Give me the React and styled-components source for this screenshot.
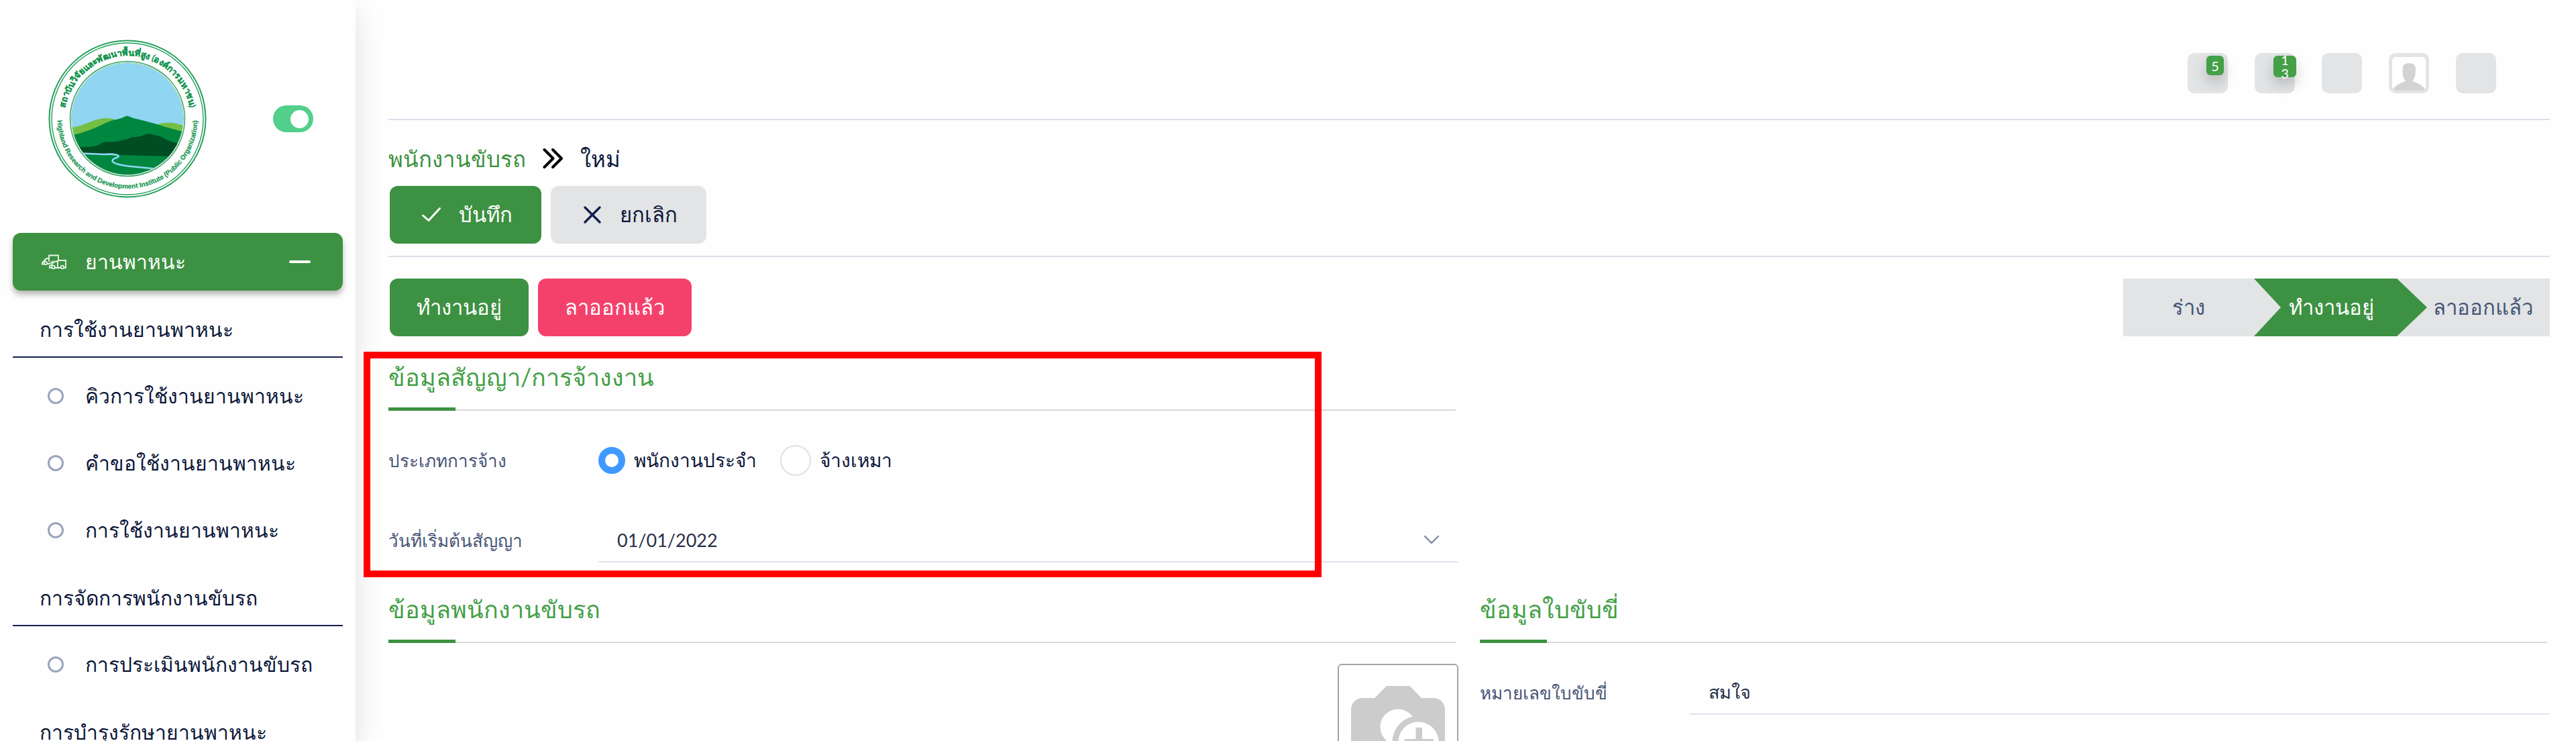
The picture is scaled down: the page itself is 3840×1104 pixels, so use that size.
import React, { useState } from 'react';
import styled, { createGlobalStyle, css } from 'styled-components';

const GlobalStyle = createGlobalStyle`
  *,
  *::before,
  *::after {
    box-sizing: border-box;
  }

  body {
    margin: 0;
    background: #fefefe;
    color: #0b1739;
    font-family: Lato, sans-serif;
    font-size: 30px;
  }

  button,
  input {
    font: inherit;
    color: inherit;
    margin: 0;
  }

  button {
    border: 0;
    padding: 0;
    cursor: pointer;
  }

  a {
    color: inherit;
    text-decoration: none;
  }
`;

const Page = styled.div`
  display: flex;
  height: 100vh;
  overflow: hidden;
`;

const Sidebar = styled.aside`
  flex: 0 0 530px;
  padding: 0 19px;
  background: #fefefe;
  box-shadow: 0 16px 40px rgba(0, 0, 0, 0.12);
`;

const Brand = styled.div`
  display: flex;
  align-items: center;
  justify-content: space-between;
  padding: 59px 44px 52px 53px;
`;

const LogoSvg = styled.svg`
  display: block;
  width: 236px;
  height: 236px;
`;

const Toggle = styled.input.attrs({ type: 'checkbox' })`
  appearance: none;
  display: flex;
  align-items: center;
  width: 60px;
  height: 40px;
  padding: 0 7px;
  border-radius: 20px;
  background: #c9ced8;

  &::before {
    content: '';
    width: 27px;
    height: 27px;
    border-radius: 50%;
    background: white;
  }

  &:checked {
    justify-content: flex-end;
    background: #52cf8b;
  }
`;

const MenuButton = styled.button`
  display: flex;
  align-items: center;
  gap: 27px;
  width: 100%;
  height: 86px;
  margin-bottom: 7px;
  padding: 0 48px 0 43px;
  border-radius: 12px;
  background: #3d9142;
  color: white;
  box-shadow: 0 6px 8px rgba(0, 0, 0, 0.28);
`;

const MinusBar = styled.span`
  width: 32px;
  height: 4px;
  margin-left: auto;
  border-radius: 2px;
  background: white;
`;

const MenuGroup = styled.div`
  display: flex;
  align-items: center;
  height: 93px;
  margin-bottom: 7px;
  padding: 12px 40px 0;
  border-bottom: 2px solid #131f4d;
  white-space: nowrap;
`;

const MenuItem = styled.a`
  display: flex;
  align-items: center;
  gap: 32px;
  height: 100px;
  padding-left: 52px;
  white-space: nowrap;

  &::before {
    content: '';
    width: 24px;
    height: 24px;
    border: 3px solid #9aa4bd;
    border-radius: 50%;
  }
`;

const Main = styled.main`
  flex: 1;
  min-width: 0;
  padding: 0 39px 0 49px;
`;

const TopBar = styled.header`
  display: flex;
  justify-content: flex-end;
  gap: 40px;
  padding: 79px 80px 38px;
  border-bottom: 2px solid #dadfea;
`;

const TopButton = styled.button`
  position: relative;
  width: 60px;
  height: 60px;
  padding: 6px 5px 4px;
  border-radius: 10px;
  background: #e2e4e6;
`;

const Badge = styled.span`
  position: absolute;
  top: 4px;
  left: 28px;
  display: flex;
  align-items: center;
  justify-content: center;
  width: ${props => (props.$wide ? 34 : 26)}px;
  height: ${props => (props.$wide ? 32 : 29)}px;
  padding: 0 ${props => (props.$wide ? 12 : 6)}px;
  border-radius: 6px;
  background: #43a047;
  color: white;
  font-size: 20px;
  line-height: 20px;
  word-break: break-all;
  box-shadow: 0 10px 20px rgba(0, 0, 0, 0.2);
`;

const Avatar = styled.svg`
  display: block;
  width: 50px;
  height: 50px;
  border-radius: 6px;
`;

const ControlPanel = styled.div`
  padding: 33px 0 18px;
  border-bottom: 2px solid #dadfea;
`;

const Breadcrumb = styled.nav`
  display: flex;
  align-items: center;
  gap: 25px;
  margin-bottom: 17px;
  font-size: 33px;
  line-height: 48px;

  a {
    color: #3d9142;
  }
`;

const ButtonRow = styled.div`
  display: flex;
  gap: 14px;
  padding-left: 2px;
`;

const tones = {
  green: css`
    background: #3d9142;
    color: white;
  `,
  grey: css`
    background: #e2e4e6;
  `,
  red: css`
    background: #f4416c;
    color: white;
  `,
};

const Button = styled.button`
  display: flex;
  align-items: center;
  gap: 27px;
  height: 86px;
  padding: 0 40px;
  border-radius: 12px;
  font-size: 31px;
  white-space: nowrap;
  ${props => tones[props.$tone]}
`;

const IconButton = styled(Button)`
  padding: 0 43px 0 48px;
`;

const StatusRow = styled.div`
  display: flex;
  justify-content: space-between;
  margin: 32px 0 14px;
`;

const StatusBar = styled.div`
  display: flex;
  height: 86px;
  background: #e2e4e6;
  color: #475577;
`;

const Stage = styled.button`
  padding: ${props => props.$pad};
  background: transparent;
  font-size: 31px;
  white-space: nowrap;

  ${props =>
    props.$active &&
    css`
      background: #3d9142;
      color: white;
      clip-path: polygon(
        0 0,
        calc(100% - 45px) 0,
        100% 50%,
        calc(100% - 45px) 100%,
        0 100%,
        40px 50%
      );
    `}
`;

const FormGrid = styled.div`
  display: grid;
  grid-template-columns: 1fr 1fr;
  gap: 23px 32px;
`;

const Section = styled.section`
  position: relative;
  grid-column-start: ${props => props.$column || 'auto'};
`;

const SectionTitle = styled.h2`
  position: relative;
  display: flex;
  align-items: center;
  height: 97px;
  margin: 0 4px 0 0;
  border-bottom: 2px solid #d8d8d8;
  color: #43a047;
  font-size: 36px;
  font-weight: 400;

  &::after {
    content: '';
    position: absolute;
    left: 0;
    bottom: -2px;
    width: 100px;
    height: 5px;
    background: #3d9142;
  }
`;

const Fields = styled.div`
  display: flex;
  flex-direction: column;
  gap: 53px;
  padding-top: 41px;
`;

const Field = styled.div`
  display: grid;
  grid-template-columns: 313px 1fr;
  align-items: center;
  height: 66px;
`;

const Label = styled.label`
  color: #475577;
  font-size: 26px;
`;

const InputBox = styled.div`
  display: flex;
  align-items: center;
  height: 66px;
  padding: 0 28px;
  border-bottom: 2px solid #dfe4ef;
  color: #7f88a8;
`;

const TextInput = styled.input`
  flex: 1;
  min-width: 0;
  border: 0;
  padding: 0;
  outline: none;
  background: transparent;
  color: #28304a;
  font-size: 27px;
`;

const RadioGroup = styled.div`
  display: flex;
  gap: 35px;
`;

const RadioLabel = styled.label`
  display: flex;
  align-items: center;
  gap: 13px;
  font-size: 28px;
`;

const Radio = styled.input.attrs({ type: 'radio' })`
  appearance: none;
  width: 46px;
  height: 46px;
  border: 2px solid #dde0ea;
  border-radius: 50%;
  background: white;

  &:checked {
    width: 40px;
    height: 40px;
    border: 10px solid #4099ff;
  }
`;

const PhotoRow = styled.div`
  display: flex;
  justify-content: flex-end;
  padding-top: 31px;
`;

const PhotoButton = styled.button`
  width: 180px;
  height: 180px;
  padding: 31px 18px;
  border: 2px solid #a4a4a4;
  border-radius: 6px;
  background: white;
`;

const Highlight = styled.div`
  position: absolute;
  top: 9px;
  right: 204px;
  bottom: -22px;
  left: -37px;
  border: 10px solid #ff0000;
  pointer-events: none;
`;

const Logo = () => (
  <LogoSvg viewBox="0 0 236 236" fill="none">
    <defs>
      <clipPath id="view">
        <circle cx="118" cy="118" r="83" />
      </clipPath>
      <path id="arc-top" d="M24 118 A94 94 0 0 1 212 118" />
      <path id="arc-bottom" d="M15.5 97 A104.5 104.5 0 1 0 220.5 97" />
    </defs>
    <circle cx="118" cy="118" r="116.5" stroke="#23a05c" strokeWidth="2" />
    <circle cx="118" cy="118" r="113" stroke="#23a05c" strokeWidth="1.4" />
    <circle cx="118" cy="118" r="85.5" stroke="#2f9e5f" strokeWidth="1.4" />
    <circle cx="118" cy="118" r="83.5" stroke="#8cc9a3" strokeWidth="1" />
    <g clipPath="url(#view)">
      <rect width="236" height="236" fill="#90d5f1" />
      <path
        d="M30 132 Q46 130 62 123 Q86 113 102 120 L130 140 L160 127 Q182 119 206 130 V160 H30 Z"
        fill="#74bf44"
      />
      <path
        d="M30 144 Q58 138 84 125 Q94 120 102 119 Q110 117 117 113.500 Q120 114 127 117 Q148 122 165 127 Q186 134 206 138 V206 H30 Z"
        fill="#00863e"
      />
      <path
        d="M40 160 Q66 161 75 157 Q81 152 88 152.500 Q100 153 110 150 Q118 149 124 145.500 Q134 145 140 143 Q145 141 149 140 Q158 142 168 144.500 Q174 149 180 151 L194 155 L184 174 L111 172 L48 169 Z"
        fill="#004d24"
      />
      <path
        d="M50 169.500 L84 171 Q94 170 101 171.500 Q107 173 103 175.500 Q94 178 96 182 Q102 187 124 189 L160 192.500"
        stroke="#8fd6f2"
        strokeWidth="2.600"
      />
    </g>
    <text
      fill="#12954f"
      stroke="#12954f"
      strokeWidth="0.300"
      fontFamily="Lato, sans-serif"
      fontSize="13"
      fontWeight="700"
      textAnchor="middle"
    >
      <textPath href="#arc-top" startOffset="50%">
        สถาบันวิจัยและพัฒนาพื้นที่สูง (องค์การมหาชน)
      </textPath>
    </text>
    <text
      fill="#12954f"
      stroke="#12954f"
      strokeWidth="0.200"
      fontFamily="Liberation Sans, sans-serif"
      fontSize="10"
      fontWeight="700"
      textAnchor="middle"
    >
      <textPath href="#arc-bottom" startOffset="50%">
        Highland Research and Development Institute (Public Organization)
      </textPath>
    </text>
  </LogoSvg>
);

const TruckIcon = () => (
  <svg width="38" height="22" viewBox="0 0 38 22" fill="none" stroke="#eaf6ea" strokeWidth="1.8">
    <path d="M11 11 V1.500 H25 V8" />
    <path d="M11 6 H7.500 Q4 7.500 3 10.500 L1 12 V14.500 H3.500 M8.500 14 H11 L18 10" />
    <path d="M4.500 10 L6.500 7.500" />
    <circle cx="6" cy="13" r="2.200" />
    <path d="M24 9 H36 V20 H33.500 M24 9 V20 M28 20 H20" />
    <path d="M24 10.500 H20.500 Q16 12.500 15 15.500 L12 17 V20 H15" />
    <circle cx="17.500" cy="19" r="2.300" />
    <circle cx="31" cy="19" r="2.300" />
  </svg>
);

const DoubleChevron = () => (
  <svg
    width="31"
    height="36"
    viewBox="0 0 31 36"
    fill="none"
    stroke="black"
    strokeWidth="4"
    strokeLinecap="round"
    strokeLinejoin="round"
  >
    <path d="M2.500 5 L15.500 18 L2.500 31" />
    <path d="M15 5 L28 18 L15 31" />
  </svg>
);

const CheckIcon = () => (
  <svg
    width="28"
    height="28"
    viewBox="0 0 28 28"
    fill="none"
    stroke="white"
    strokeWidth="3"
    strokeLinecap="round"
    strokeLinejoin="round"
  >
    <path d="M1.500 15 L10 22.500 L26.500 4.500" />
  </svg>
);

const CrossIcon = () => (
  <svg
    width="28"
    height="28"
    viewBox="0 0 28 28"
    fill="none"
    stroke="#131f4d"
    strokeWidth="3.400"
    strokeLinecap="round"
  >
    <path d="M3 3 L25 25 M25 3 L3 25" />
  </svg>
);

const ChevronDown = () => (
  <svg
    width="24"
    height="14"
    viewBox="0 0 24 14"
    fill="none"
    stroke="currentColor"
    strokeWidth="2.400"
    strokeLinecap="round"
    strokeLinejoin="round"
  >
    <path d="M2 2 L12 12 L22 2" />
  </svg>
);

const CameraIcon = () => (
  <svg width="140" height="118" viewBox="0 0 140 118">
    <path
      d="M53 0 H87.500 L105 18 H123 A17 17 0 0 1 140 35 V101 A17 17 0 0 1 123 118 H17 A17 17 0 0 1 0 101 V35 A17 17 0 0 1 17 18 H35 Z"
      fill="#ccc"
    />
    <circle cx="70" cy="61" r="26.500" fill="white" />
    <circle cx="100.500" cy="83.500" r="39" fill="#ccc" />
    <circle cx="100.500" cy="83.500" r="30" fill="white" />
    <path d="M96.500 62 H106 V79 H123 V88 H106 V105 H96.500 V88 H79.500 V79 H96.500 Z" fill="#ccc" />
  </svg>
);

const App = () => {
  const [menuOpen, setMenuOpen] = useState(true);
  const [hireType, setHireType] = useState('permanent');

  return (
    <>
      <GlobalStyle />
      <Page>
        <Sidebar>
          <Brand>
            <Logo />
            <Toggle aria-label="Pin menu" defaultChecked />
          </Brand>
          <MenuButton aria-expanded={menuOpen} onClick={() => setMenuOpen(!menuOpen)}>
            <TruckIcon />
            ยานพาหนะ
            <MinusBar />
          </MenuButton>
          {menuOpen && (
            <nav>
              <MenuGroup>การใช้งานยานพาหนะ</MenuGroup>
              <MenuItem href="#queue">คิวการใช้งานยานพาหนะ</MenuItem>
              <MenuItem href="#request">คำขอใช้งานยานพาหนะ</MenuItem>
              <MenuItem href="#usage">การใช้งานยานพาหนะ</MenuItem>
              <MenuGroup>การจัดการพนักงานขับรถ</MenuGroup>
              <MenuItem href="#rating">การประเมินพนักงานขับรถ</MenuItem>
              <MenuGroup>การบำรุงรักษายานพาหนะ</MenuGroup>
            </nav>
          )}
        </Sidebar>
        <Main>
          <TopBar>
            <TopButton aria-label="Messages">
              <Badge>5</Badge>
            </TopButton>
            <TopButton aria-label="Activities">
              <Badge $wide>13</Badge>
            </TopButton>
            <TopButton aria-label="Apps" />
            <TopButton aria-label="Profile">
              <Avatar viewBox="0 0 50 50">
                <rect width="50" height="50" fill="white" />
                <path
                  d="M25 9 C31 9 35 12 35 18 C35 26 34 31 30 36 C37 38 45 42 49 48 L47 50 H3 L1 48 C5 42 13 38 20 36 C16 31 15.500 26 15.500 18 C15.500 12 19 9 25 9 Z"
                  fill="#d3d3d3"
                />
              </Avatar>
            </TopButton>
            <TopButton aria-label="Settings" />
          </TopBar>
          <ControlPanel>
            <Breadcrumb>
              <a href="#drivers">พนักงานขับรถ</a>
              <DoubleChevron />
              <span>ใหม่</span>
            </Breadcrumb>
            <ButtonRow>
              <IconButton $tone="green">
                <CheckIcon />
                บันทึก
              </IconButton>
              <IconButton $tone="grey">
                <CrossIcon />
                ยกเลิก
              </IconButton>
            </ButtonRow>
          </ControlPanel>
          <StatusRow>
            <ButtonRow>
              <Button $tone="green">ทำงานอยู่</Button>
              <Button $tone="red">ลาออกแล้ว</Button>
            </ButtonRow>
            <StatusBar>
              <Stage $pad="0 73px">ร่าง</Stage>
              <Stage $pad="0 79px 0 52px" $active>
                ทำงานอยู่
              </Stage>
              <Stage $pad="0 25px 0 9px">ลาออกแล้ว</Stage>
            </StatusBar>
          </StatusRow>
          <FormGrid>
            <Section>
              <SectionTitle>ข้อมูลสัญญา/การจ้างงาน</SectionTitle>
              <Fields>
                <Field>
                  <Label as="span" id="hire-label">
                    ประเภทการจ้าง
                  </Label>
                  <RadioGroup role="radiogroup" aria-labelledby="hire-label">
                    <RadioLabel>
                      <Radio
                        name="hire"
                        checked={hireType === 'permanent'}
                        onChange={() => setHireType('permanent')}
                      />
                      พนักงานประจำ
                    </RadioLabel>
                    <RadioLabel>
                      <Radio
                        name="hire"
                        checked={hireType === 'contract'}
                        onChange={() => setHireType('contract')}
                      />
                      จ้างเหมา
                    </RadioLabel>
                  </RadioGroup>
                </Field>
                <Field>
                  <Label htmlFor="start-date">วันที่เริ่มต้นสัญญา</Label>
                  <InputBox>
                    <TextInput id="start-date" defaultValue="01/01/2022" />
                    <ChevronDown />
                  </InputBox>
                </Field>
              </Fields>
              <Highlight />
            </Section>
            <Section $column={1}>
              <SectionTitle>ข้อมูลพนักงานขับรถ</SectionTitle>
              <PhotoRow>
                <PhotoButton aria-label="Add photo">
                  <CameraIcon />
                </PhotoButton>
              </PhotoRow>
            </Section>
            <Section>
              <SectionTitle>ข้อมูลใบขับขี่</SectionTitle>
              <Fields>
                <Field>
                  <Label htmlFor="license">หมายเลขใบขับขี่</Label>
                  <InputBox>
                    <TextInput id="license" defaultValue="สมใจ" />
                  </InputBox>
                </Field>
              </Fields>
            </Section>
          </FormGrid>
        </Main>
      </Page>
    </>
  );
};

export default App;
